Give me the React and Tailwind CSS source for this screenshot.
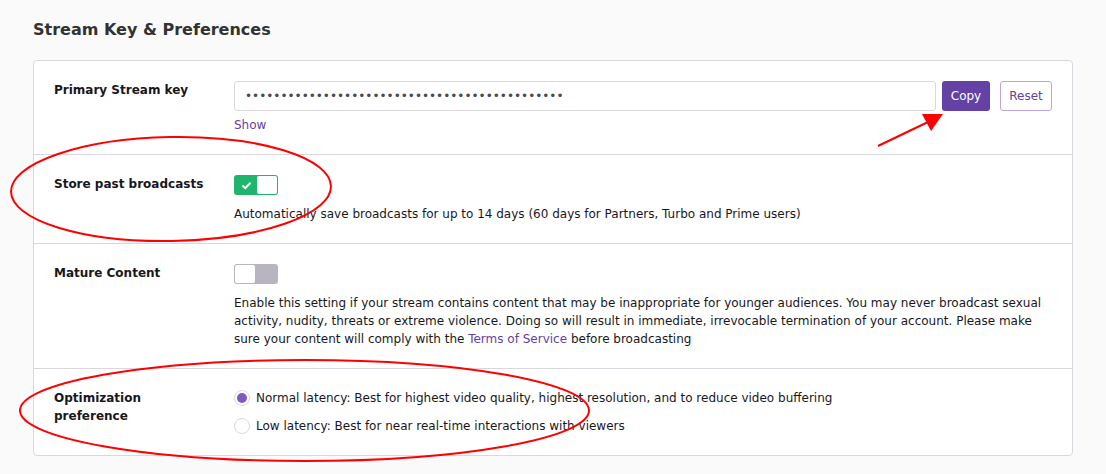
import React from "react";

const font = { fontFamily: '"DejaVu Sans", Verdana, sans-serif' };

function Row({ label, children, last }) {
  return (
    <div className={`flex px-5 pt-5 ${last ? "" : "border-b border-[#dad8de]"}`}>
      <div className="w-[180px] shrink-0 text-[12px] font-bold leading-[18px] text-[#19171c] pr-[20px]">{label}</div>
      <div className="flex-1">{children}</div>
    </div>
  );
}

function Toggle({ on }) {
  return on ? (
    <div className="w-[44px] h-[20px] rounded-[3px] bg-[#1fb56c] flex items-center p-px">
      <div className="w-[22px] flex items-center justify-center">
        <svg width="11" height="9" viewBox="0 0 11 9"><path d="M1.5 4.5 L4.3 7.2 L9.5 1.8" stroke="white" strokeWidth="2" fill="none" /></svg>
      </div>
      <div className="flex-1 h-[18px] bg-white rounded-[2px]"></div>
    </div>
  ) : (
    <div className="w-[44px] h-[20px] rounded-[3px] bg-[#b8b5c0] flex items-center p-px">
      <div className="w-[20px] h-[18px] bg-white rounded-[2px]"></div>
    </div>
  );
}

function Radio({ checked, children }) {
  return (
    <div className="flex items-center gap-[6px] h-[18px] text-[12px] text-[#19171c]">
      <div className="w-[16px] h-[16px] rounded-full border border-[#dad8de] bg-white flex items-center justify-center">
        {checked && <div className="w-[10px] h-[10px] rounded-full bg-[#7d5bbe]"></div>}
      </div>
      <span>{children}</span>
    </div>
  );
}

export default function App() {
  return (
    <div className="relative w-[1106px] h-[474px] bg-[#fafafa] overflow-hidden" style={font}>
      <div className="pl-[33px] pr-[33px] pt-[19px]">
        <h2 className="text-[16px] font-bold text-[#323232] leading-[22px] mb-[19px]">Stream Key &amp; Preferences</h2>
        <div className="bg-white border border-[#dad8de] rounded-[4px]">
          <Row label="Primary Stream key">
            <div className="flex items-center">
              <div className="flex-1 h-[30px] border border-[#dad8de] rounded-[3px] flex items-center px-[10px] text-[12px] text-[#4b4b4b]">
                •••••••••••••••••••••••••••••••••••••••••••••
              </div>
              <button className="ml-[6px] h-[30px] w-[48px] rounded-[3px] bg-[#6441a4] text-white text-[12px]">Copy</button>
              <button className="ml-[10px] h-[30px] w-[52px] rounded-[3px] border border-[#b9a3e3] bg-white text-[#6441a4] text-[12px]">Reset</button>
            </div>
            <div className="text-[12px] text-[#6441a4] leading-[18px] mt-[5px] pb-[20px]">Show</div>
          </Row>
          <Row label="Store past broadcasts">
            <Toggle on />
            <p className="text-[12px] leading-[18px] text-[#19171c] mt-[10px] pb-[20px]">
              Automatically save broadcasts for up to 14 days (60 days for Partners, Turbo and Prime users)
            </p>
          </Row>
          <Row label="Mature Content">
            <Toggle />
            <p className="text-[12px] leading-[18px] text-[#19171c] mt-[10px] pb-[20px]">
              Enable this setting if your stream contains content that may be inappropriate for younger audiences. You may never broadcast sexual activity, nudity, threats or extreme violence. Doing so will result in immediate, irrevocable termination of your account. Please make sure your content will comply with the <span className="text-[#6441a4]">Terms of Service</span> before broadcasting
            </p>
          </Row>
          <Row label="Optimization preference" last>
            <div className="flex flex-col gap-[10px] pb-[20px]">
              <Radio checked>Normal latency: Best for highest video quality, highest resolution, and to reduce video buffering</Radio>
              <Radio>Low latency: Best for near real-time interactions with viewers</Radio>
            </div>
          </Row>
        </div>
      </div>
      <svg className="absolute inset-0 pointer-events-none" width="1106" height="474">
        <ellipse cx="171" cy="189" rx="160" ry="52" fill="none" stroke="#ff0000" strokeWidth="2" transform="rotate(-1 171 189)" />
        <ellipse cx="304.5" cy="410.5" rx="284.5" ry="50.5" fill="none" stroke="#ff0000" strokeWidth="2" />
        <line x1="878" y1="146" x2="928" y2="122" stroke="#ff0000" strokeWidth="2" />
        <polygon points="943,114 922,114 931,131" fill="#ff0000" />
      </svg>
    </div>
  );
}
